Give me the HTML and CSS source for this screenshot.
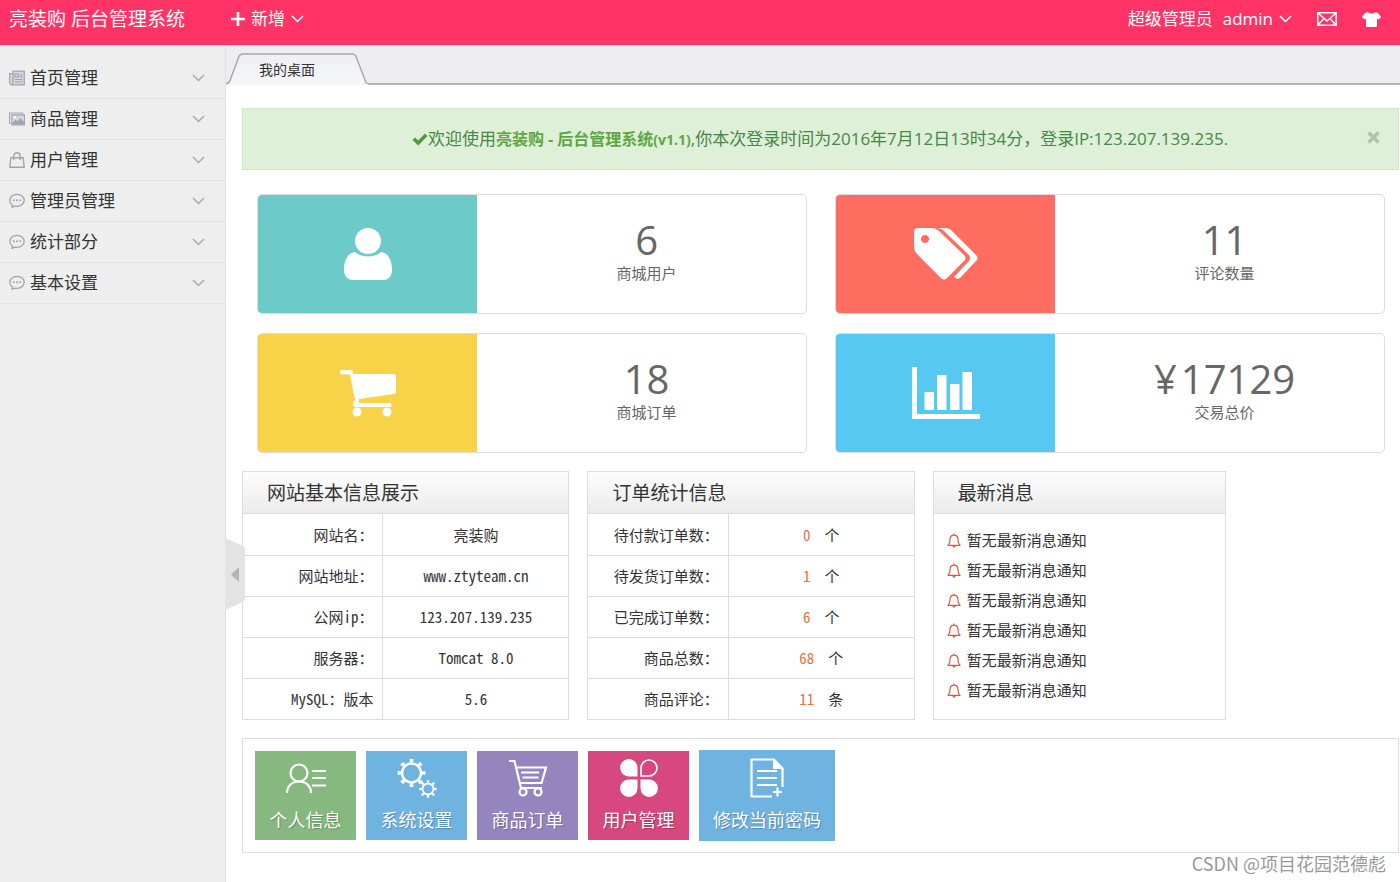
FILE: index.html
```html
<!DOCTYPE html>
<html lang="zh-CN">
<head>
<meta charset="utf-8">
<title>亮装购 后台管理系统</title>
<link rel="stylesheet" href="styles.css">
</head>
<body>
<svg class="defs" aria-hidden="true">
  <symbol id="chev" viewBox="0 0 13 8"><path d="M1 1l5.500 5.500L12 1" fill="none" stroke="currentColor" stroke-width="1.500"/></symbol>
  <symbol id="chat" viewBox="0 0 16 15"><path d="M3.500 11.600C1.800 10.400.8 8.700.8 6.900.8 3.600 4 .8 8 .8s7.200 2.700 7.200 6-3.200 6-7.200 6c-.8 0-1.500-.1-2.200-.2L3 14z" fill="none" stroke="currentColor" stroke-width="1.300" stroke-linejoin="round"/><g fill="currentColor"><circle cx="4.800" cy="6.800" r="1"/><circle cx="8" cy="6.800" r="1"/><circle cx="11.200" cy="6.800" r="1"/></g></symbol>
  <symbol id="bell" viewBox="0 0 14 15"><path d="M7 .6v1.600M1 12.300c1.600-1.300 2-2.800 2-5.300 0-3 1.500-4.800 4-4.800S11 4 11 7c0 2.500.4 4 2 5.300z" fill="none" stroke="currentColor" stroke-width="1.200" stroke-linejoin="round"/><path d="M5.200 13h3.600L7 15z" fill="currentColor"/></symbol>
</svg>

<header class="topbar">
  <h1 class="brand">亮装购 后台管理系统</h1>
  <button class="top-btn" type="button">
    <svg width="14" height="14" viewBox="0 0 14 14"><path d="M7 0v14M0 7h14" stroke="currentColor" stroke-width="2.600"/></svg>
    新增
    <svg width="13" height="8"><use href="#chev"/></svg>
  </button>
  <div class="account">
    <span>超级管理员</span>
    <button class="top-btn" type="button">admin <svg width="13" height="8"><use href="#chev"/></svg></button>
    <button class="top-icon" type="button" aria-label="消息"><svg width="20" height="14" viewBox="0 0 20 14"><path d="M.8.800h18.400v12.400H.8zM1.500 1.500L10 9l8.500-7.500M1.500 12.500L7 6.500M18.500 12.500L13 6.500" fill="none" stroke="currentColor" stroke-width="1.500"/></svg></button>
    <button class="top-icon" type="button" aria-label="换肤"><svg width="19" height="15" viewBox="0 0 19 15"><path d="M6 0C7 2 12 2 13 0L16 1l3 4-2.500 2.500L15 6.500V14q0 1-1 1H5q-1 0-1-1V6.500L2.500 7.500 0 5l3-4z" fill="currentColor"/></svg></button>
  </div>
</header>

<div class="layout">
  <nav class="sidebar">
    <button class="nav-item" type="button"><svg class="nav-icon" viewBox="0 0 16 15"><path d="M4 .7h11.300v13.600H2.500Q.7 14.300.7 12.500V3H4zM4 3v9.500q0 1.500-1.500 1.800" fill="#d4d7dd" stroke="currentColor" stroke-width="1.200"/><path d="M6 3.500h3.500v3H6zM11 4h2.500M11 6.200h2.500M6 9h7.500M6 11.500h7.500" fill="none" stroke="currentColor" stroke-width="1.200"/></svg><span>首页管理</span><svg class="nav-chev"><use href="#chev"/></svg></button>
    <button class="nav-item" type="button"><svg class="nav-icon" viewBox="0 0 17 14"><path d="M2 11.500H.6V.6h13.800V2" fill="none" stroke="currentColor" stroke-width="1.200"/><path d="M3 2.600h13.400v10.800H3z" fill="#d4d7dd" stroke="currentColor" stroke-width="1.200"/><path d="M3.500 11.500L7 7.500l2 2L12 6l4 4.500V13H3.500z" fill="currentColor"/><circle cx="6" cy="5.200" r="1.300" fill="#fff"/></svg><span>商品管理</span><svg class="nav-chev"><use href="#chev"/></svg></button>
    <button class="nav-item" type="button"><svg class="nav-icon" viewBox="0 0 16 16"><path d="M1.800 5.700h12.400l1 9.500H.8zM4.800 8V4.500C4.800 2.200 6 .8 8 .8s3.200 1.400 3.200 3.700V8" fill="none" stroke="currentColor" stroke-width="1.400" stroke-linejoin="round"/></svg><span>用户管理</span><svg class="nav-chev"><use href="#chev"/></svg></button>
    <button class="nav-item" type="button"><svg class="nav-icon"><use href="#chat"/></svg><span>管理员管理</span><svg class="nav-chev"><use href="#chev"/></svg></button>
    <button class="nav-item" type="button"><svg class="nav-icon"><use href="#chat"/></svg><span>统计部分</span><svg class="nav-chev"><use href="#chev"/></svg></button>
    <button class="nav-item" type="button"><svg class="nav-icon"><use href="#chat"/></svg><span>基本设置</span><svg class="nav-chev"><use href="#chev"/></svg></button>
    <button class="collapse" type="button" aria-label="收起菜单"><svg width="20" height="72" viewBox="0 0 20 72"><path d="M0 0l18 8q2 1 2 3v50q0 2-2 3L0 72z" fill="#e3e3e3"/><path d="M14 29v15l-8-7.500z" fill="#b5b5b5"/></svg></button>
  </nav>

  <main class="main">
    <div class="tabs">
      <a class="tab" href="#"><svg class="tab-shape" viewBox="0 0 142 32"><defs><linearGradient id="tabFill" x2="0" y2="1"><stop offset="0" stop-color="#eeeff1"/><stop offset="1" stop-color="#f6f7f9"/></linearGradient></defs><path d="M0 30.500q3 0 4-3L13 3.500Q14 1 17 1H126q3 0 4 2.500l10 26q.5 1 2 1V32H0z" fill="url(#tabFill)"/><path d="M0 30.500q3 0 4-3L13 3.500Q14 1 17 1H126q3 0 4 2.500l10 26q.5 1 2 1" fill="none" stroke="#a9a9ab" stroke-width="1.500"/></svg><span class="tab-text">我的桌面</span></a>
      <div class="tab-rest"></div>
    </div>

    <div class="content">
      <div class="alert">
        <p class="alert-text"><svg width="16" height="13" viewBox="0 0 16 13"><path d="M.5 7L3 4.500l3.200 3L13 .5 15.500 3 6.200 12.500z" fill="currentColor"/></svg>欢迎使用<strong>亮装购 - 后台管理系统<small>(v1.1)</small></strong>,你本次登录时间为2016年7月12日13时34分，登录IP:123.207.139.235.</p>
        <button class="alert-close" type="button" aria-label="关闭"><svg width="13" height="13" viewBox="0 0 13 13"><path d="M1.500 1.500l10 10M11.500 1.500l-10 10" stroke="currentColor" stroke-width="3.600"/></svg></button>
      </div>

      <section class="stats">
        <article class="stat">
          <div class="stat-icon teal"><svg width="48" height="52" viewBox="0 0 48 52" fill="#fff"><ellipse cx="24" cy="13" rx="13" ry="13"/><path d="M11 24C3 25 0 34 0 41c0 7 3 11 9 11h30c6 0 9-4 9-11 0-7-3-16-11-17-3 3-8 4.500-13 4.500S14 27 11 24z"/></svg></div>
          <div class="stat-body"><b class="num">6</b><span class="stat-label">商城用户</span></div>
        </article>
        <article class="stat">
          <div class="stat-icon coral"><svg width="64" height="52" viewBox="0 0 64 52" fill="#fff"><path fill-rule="evenodd" d="M4 0h14q4 0 7 3l25 24q3 3 0 6L33 50q-3 3-6 0L3 26q-3-3-3-7V4q0-4 4-4zM11 7a4 4 0 1 0 .01 0z"/><path d="M24 0h7q5 0 8 4l23 23q3 3 0 6L46 50q-3 2-6-1l15-16q2-3 0-6L32 5Q29 1 24 0z"/></svg></div>
          <div class="stat-body"><b class="num">11</b><span class="stat-label">评论数量</span></div>
        </article>
        <article class="stat">
          <div class="stat-icon yellow"><svg width="56" height="47" viewBox="0 0 56 47" fill="#fff"><path d="M2 0h9q2 0 2 4h41q2 0 2 2v16q0 2-2 2L19 29v4h31q1.500 0 1.500 2T50 37H16q-3 0-3-3t2-4L10 4.500H2Q0 4.500 0 2.200T2 0z"/><circle cx="17" cy="42" r="4.500"/><circle cx="47" cy="42" r="4.500"/></svg></div>
          <div class="stat-body"><b class="num">18</b><span class="stat-label">商城订单</span></div>
        </article>
        <article class="stat">
          <div class="stat-icon blue"><svg width="68" height="52" viewBox="0 0 68 52" fill="#fff"><path d="M0 0h5v47h63v5H0zM12.500 25H22v18h-9.500zM25 8h9.500v35H25zM38 17h9.500v26H38zM50.500 5H60v38h-9.500z"/></svg></div>
          <div class="stat-body"><b class="num"><span class="currency">¥</span>17129</b><span class="stat-label">交易总价</span></div>
        </article>
      </section>

      <section class="panels">
        <div class="panel">
          <h2 class="panel-title">网站基本信息展示</h2>
          <table class="info">
            <tr><th scope="row">网站名：</th><td>亮装购</td></tr>
            <tr><th scope="row">网站地址：</th><td>www.ztyteam.cn</td></tr>
            <tr><th scope="row">公网ip：</th><td>123.207.139.235</td></tr>
            <tr><th scope="row">服务器：</th><td>Tomcat 8.0</td></tr>
            <tr><th scope="row">MySQL：版本</th><td>5.6</td></tr>
          </table>
        </div>
        <div class="panel">
          <h2 class="panel-title">订单统计信息</h2>
          <table class="info">
            <tr><th scope="row">待付款订单数：</th><td><span class="count">0</span>个</td></tr>
            <tr><th scope="row">待发货订单数：</th><td><span class="count">1</span>个</td></tr>
            <tr><th scope="row">已完成订单数：</th><td><span class="count">6</span>个</td></tr>
            <tr><th scope="row">商品总数：</th><td><span class="count">68</span>个</td></tr>
            <tr><th scope="row">商品评论：</th><td><span class="count">11</span>条</td></tr>
          </table>
        </div>
        <div class="panel">
          <h2 class="panel-title">最新消息</h2>
          <ul class="news">
            <li><svg class="bell"><use href="#bell"/></svg>暂无最新消息通知</li>
            <li><svg class="bell"><use href="#bell"/></svg>暂无最新消息通知</li>
            <li><svg class="bell"><use href="#bell"/></svg>暂无最新消息通知</li>
            <li><svg class="bell"><use href="#bell"/></svg>暂无最新消息通知</li>
            <li><svg class="bell"><use href="#bell"/></svg>暂无最新消息通知</li>
            <li><svg class="bell"><use href="#bell"/></svg>暂无最新消息通知</li>
          </ul>
        </div>
      </section>

      <section class="quick">
        <a class="tile green" href="#"><svg width="40" height="40" viewBox="0 0 40 40" fill="none" stroke="currentColor" stroke-width="2.200"><circle cx="13" cy="15" r="8.500"/><path d="M1 35c0-7 5-11.500 12-11.500S25 28 25 35M26 13h14M26 20h14M26 27.500h14"/></svg>个人信息</a>
        <a class="tile sky" href="#"><svg width="40" height="40" viewBox="0 0 40 40" fill="none" stroke="currentColor"><circle cx="14.500" cy="15" r="9.500" stroke-width="2.400"/><circle cx="14.500" cy="15" r="12.200" stroke-width="3.400" pathLength="80" stroke-dasharray="4 6" stroke-dashoffset="2"/><circle cx="31" cy="31" r="5.500" stroke-width="1.800"/><circle cx="31" cy="31" r="7.500" stroke-width="2.600" pathLength="80" stroke-dasharray="4 6" stroke-dashoffset="2"/></svg>系统设置</a>
        <a class="tile purple" href="#"><svg width="40" height="40" viewBox="0 0 40 40" fill="none" stroke="currentColor" stroke-width="2.200"><path d="M1 3h5.500L13 30h21M8 9.500h30L33.500 25H12M13 14.500h18M14.500 19.500h16"/><circle cx="15" cy="34" r="3.500"/><circle cx="30" cy="34" r="3.500"/></svg>商品订单</a>
        <a class="tile rose" href="#"><svg width="38" height="40" viewBox="0 0 38 40" fill="currentColor"><path d="M17.500 18.500H9A8.700 8.700 0 1 1 17.500 10zM17.500 21.500H9A8.700 8.700 0 1 0 17.500 30zM20.500 21.500H29A8.700 8.700 0 1 1 20.500 30z"/><path d="M21 18h8a8 8 0 1 0-8-8z" fill="none" stroke="currentColor" stroke-width="1.600"/></svg>用户管理</a>
        <a class="tile sky large" href="#"><svg width="34" height="40" viewBox="0 0 34 40" fill="none" stroke="currentColor" stroke-width="2.200"><path d="M22 38.500H1.500v-37H24l8.500 9V29M7 13h20M7 20h20M7 27h20M27.500 29.500v9M23 34h9"/><path d="M23 1.500l9.500 9.500H23z" fill="currentColor" stroke="none"/></svg>修改当前密码</a>
      </section>
    </div>
  </main>
</div>
<div class="watermark">CSDN @项目花园范德彪</div>
</body>
</html>
```
FILE: styles.css
```css
* { box-sizing: border-box; }

body {
  margin: 0;
  min-height: 100vh;
  display: flex;
  flex-direction: column;
  position: relative;
  background: #fff;
  color: #333;
  font-family: "Open Sans", "Noto Sans CJK SC", sans-serif;
  font-size: 15px;
}

button {
  font: inherit;
  color: inherit;
  background: none;
  border: 0;
  padding: 0;
  cursor: pointer;
}

a { color: inherit; text-decoration: none; }
svg { flex: none; }
.defs { position: absolute; width: 0; height: 0; }

/* Top bar */
.topbar {
  height: 45px;
  padding: 0 19px 7px 9px;
  display: flex;
  align-items: center;
  background: #f36;
  color: #fff;
  font-size: 17px;
  line-height: 24px;
}
.brand {
  margin: 0;
  width: 222px;
  font-size: 19px;
  font-weight: 400;
  white-space: nowrap;
}
.top-btn { display: flex; align-items: center; gap: 6px; }
.account { margin-left: auto; display: flex; align-items: center; }
.account .top-btn { margin-left: 10px; }
.top-icon { margin-left: 25px; display: flex; }

.layout { flex: 1; display: flex; }

/* Side menu */
.sidebar {
  position: relative;
  flex: 0 0 226px;
  padding-top: 13px;
  background: #eee;
  border-right: 1px solid #e2e2e2;
}
.nav-item {
  width: 100%;
  height: 41px;
  padding: 0 20px 0 9px;
  display: flex;
  align-items: center;
  border-bottom: 1px solid #e2e2e2;
  font-size: 17px;
  text-align: left;
}
.nav-item span { flex: 1; margin-left: 5px; padding-bottom: 3px; }
.nav-icon { width: 16px; height: 16px; color: #a0a4ae; }
.nav-chev { width: 13px; height: 8px; color: #aaa; }
.collapse {
  position: absolute;
  left: 225px;
  top: 493px;
  display: flex;
}

/* Tabs */
.main { flex: 1; min-width: 0; }
.tabs {
  height: 40px;
  display: flex;
  align-items: flex-end;
  background: #eeeef0;
}
.tab {
  position: relative;
  width: 142px;
  height: 32px;
  font-size: 14px;
  line-height: 34px;
  padding-left: 33px;
}
.tab-shape { position: absolute; left: 0; top: 0; width: 142px; height: 32px; }
.tab-text { position: relative; }
.tab-rest { flex: 1; height: 2px; background: #b4b4b6; }

.content {
  padding: 23px 1px 24px 16px;
  display: flex;
  flex-direction: column;
  gap: 18px;
}

/* Welcome notice */
.alert {
  min-height: 62px;
  margin-bottom: 6px;
  padding: 0 18px 0 30px;
  display: flex;
  align-items: center;
  background: #dff0d8;
  border: 1px solid #cfe8c2;
  color: #468847;
  font-size: 16px;
}
.alert-text { flex: 1; margin: 0; text-align: center; font-size: 17px; line-height: 24px; }
.alert-text svg { vertical-align: -1px; color: #4f9a3c; }
.alert-text strong { color: #5fa644; font-size: 16px; }
.alert-text small { font-size: 14px; }
.alert-close { color: #b2c3ac; display: flex; padding-bottom: 4px; }

/* Totals */
.stats {
  padding: 0 14px 0 15px;
  display: grid;
  grid-template-columns: 1fr 1fr;
  gap: 19px 28px;
}
.stat {
  height: 120px;
  display: flex;
  border: 1px solid #ddd;
  border-radius: 5px;
  overflow: hidden;
}
.stat-icon {
  width: 40%;
  display: flex;
  align-items: center;
  justify-content: center;
}
.teal { background: #6ccac9; }
.coral { background: #ff6c60; }
.yellow { background: #f8d347; }
.blue { background: #57c8f2; }
.stat-body {
  flex: 1;
  padding: 22px 0 0 10px;
  display: flex;
  flex-direction: column;
  align-items: center;
  color: #666;
}
.num { font-size: 40px; line-height: 46px; font-weight: 400; }
.currency { margin-right: 4px; }
.stat-label { font-size: 15px; line-height: 20px; }

/* Information panels */
.panels {
  display: grid;
  grid-template-columns: 28.3% 28.3% 25.3%;
  gap: 18px;
}
.panel { border: 1px solid #ddd; }
.panel-title {
  margin: 0;
  height: 42px;
  padding-left: 24px;
  font-size: 19px;
  font-weight: 400;
  line-height: 43px;
  background: linear-gradient(#fdfdfd, #ebebeb);
  border-bottom: 1px solid #ddd;
}
.info {
  width: 100%;
  table-layout: fixed;
  border-collapse: collapse;
  font-family: "Noto Sans CJK SC", sans-serif;
  font-feature-settings: "hwid";
}
.info th, .info td { height: 41px; padding: 0; }
.info tr + tr > * { border-top: 1px solid #ddd; }
.info th {
  width: 43%;
  padding-right: 9px;
  border-right: 1px solid #ddd;
  font-weight: 400;
  text-align: right;
}
.info td { text-align: center; }
.count { margin-right: 14px; color: #f0703c; }
.news { list-style: none; margin: 0; padding: 11px 13px; line-height: 30px; }
.news li { display: flex; align-items: center; gap: 6px; }
.bell { width: 14px; height: 15px; color: #e2553d; }

/* Shortcuts */
.quick {
  min-height: 115px;
  padding: 11px 12px;
  display: flex;
  align-items: center;
  gap: 10px;
  border: 1px solid #ddd;
}
.tile {
  width: 101px;
  height: 89px;
  display: flex;
  flex-direction: column;
  align-items: center;
  justify-content: center;
  gap: 9px;
  color: #fff;
  font-size: 18px;
  line-height: 26px;
  text-shadow: 1px 1px 1px rgba(0, 0, 0, .25);
}
.tile.large { width: 136px; height: 91px; }
.green { background: #87b87f; }
.sky { background: #6fb3e0; }
.purple { background: #9585bf; }
.rose { background: #d6487e; }

.watermark {
  position: absolute;
  right: 14px;
  bottom: 6px;
  color: #999;
  font-family: "Noto Sans CJK SC", sans-serif;
  font-size: 18px;
  line-height: 26px;
}
```
